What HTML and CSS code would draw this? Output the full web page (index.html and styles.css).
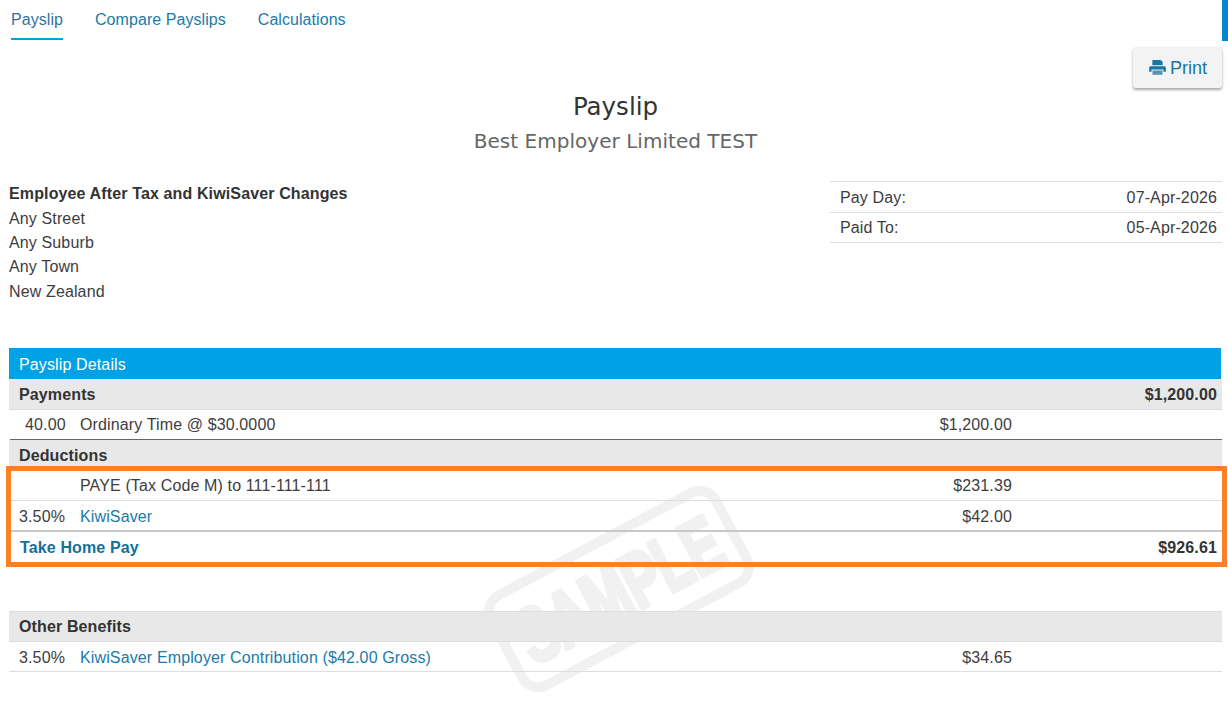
FILE: index.html
```html
<!DOCTYPE html>
<html lang="en">
<head>
<meta charset="utf-8">
<title>Payslip</title>
<link rel="stylesheet" href="styles.css">
</head>
<body>
<div class="edge"></div>
<nav class="tabs">
  <a class="tab active">Payslip</a>
  <a class="tab">Compare Payslips</a>
  <a class="tab">Calculations</a>
</nav>
<div class="print-row">
  <button class="print">
    <svg class="print-icon" viewBox="0 0 512 512" aria-hidden="true"><path d="M120 30h225l65 55v100H100V50a20 20 0 0 1 20-20z"/><path d="M50 215h412a45 45 0 0 1 45 45v125h-72v-70H77v70H5V260a45 45 0 0 1 45-45z"/><path class="print-paper" d="M105 345h302v130H105z"/></svg>
    <span>Print</span>
  </button>
</div>
<header class="title">
  <h1>Payslip</h1>
  <h2>Best Employer Limited TEST</h2>
</header>
<section class="info">
  <address class="address">
    <strong>Employee After Tax and KiwiSaver Changes</strong>
    <span>Any Street</span>
    <span>Any Suburb</span>
    <span>Any Town</span>
    <span>New Zealand</span>
  </address>
  <dl class="dates">
    <div class="date-row"><dt>Pay Day:</dt><dd>07-Apr-2026</dd></div>
    <div class="date-row"><dt>Paid To:</dt><dd>05-Apr-2026</dd></div>
  </dl>
</section>
<section class="details">
  <svg class="stamp" viewBox="0 0 280 220" aria-hidden="true">
    <g transform="rotate(-28 140 110)">
      <rect x="13" y="59" width="254" height="102" rx="18" class="stamp-box"/>
      <text x="140" y="138" text-anchor="middle" textLength="222" lengthAdjust="spacingAndGlyphs" class="stamp-text">SAMPLE</text>
    </g>
  </svg>
  <div class="heading">Payslip Details</div>
  <div class="row group"><span class="label">Payments</span><span class="total">$1,200.00</span></div>
  <div class="row line dark"><span class="qty center">40.00</span><span class="label">Ordinary Time @ $30.0000</span><span class="amt">$1,200.00</span></div>
  <div class="row group"><span class="label">Deductions</span></div>
  <div class="row line short"><span class="qty"></span><span class="label">PAYE (Tax Code M) to 111-111-111</span><span class="amt">$231.39</span></div>
  <div class="row line heavy"><span class="qty">3.50%</span><a class="label link">KiwiSaver</a><span class="amt">$42.00</span></div>
  <div class="row take short"><a class="label link">Take Home Pay</a><span class="total">$926.61</span></div>
  <div class="highlight-box"></div>
  <div class="row group benefits"><span class="label">Other Benefits</span></div>
  <div class="row line short last"><span class="qty">3.50%</span><a class="label link">KiwiSaver Employer Contribution ($42.00 Gross)</a><span class="amt">$34.65</span></div>
</section>
</body>
</html>
```
FILE: styles.css
```css
* { box-sizing: border-box; }
html, body { margin: 0; padding: 0; }
body {
  position: relative;
  width: 1228px;
  height: 704px;
  overflow: hidden;
  background: #fff;
  color: #3d3d3d;
  font: 16px/24px "Liberation Sans", Arial, sans-serif;
  letter-spacing: .13px;
}
strong, .total, .group { color: #333; }
.edge { position: absolute; top: 0; right: 0; width: 6px; height: 41px; background: #0088cc; }
.tabs { display: flex; gap: 32px; height: 40px; padding-left: 11px; letter-spacing: .06px; }
.tab { height: 40px; padding-top: 8px; color: #1a7ba8; }
.tab.active { color: #33749b; border-bottom: 2px solid #00a2e5; }
.print-row { display: flex; justify-content: flex-end; padding: 7px 6px 0 0; }
.print {
  display: flex; align-items: center; gap: 4px;
  width: 89px; height: 41px; padding: 2px 0 0 16px;
  border: 0; border-radius: 3px;
  background: #f3f3f3;
  box-shadow: 0 2px 3px rgba(0,0,0,.35);
  color: #1a75a3;
  font: 18px "Liberation Sans", Arial, sans-serif;
}
.print-icon { width: 17px; height: 17px; fill: #1a75a3; margin-top: -2px; }
.print-paper { opacity: .75; }
.title { text-align: center; padding-left: 3px; }
.title h1 { margin: 0; font: 400 24.5px/37px "DejaVu Sans", sans-serif; color: #333; letter-spacing: 0; }
.title h2 { margin: 0; font: 400 20px/32px "DejaVu Sans", sans-serif; color: #666; letter-spacing: .03px; }
.info { display: flex; justify-content: space-between; margin-top: 25px; padding: 0 6px 0 9px; height: 166px; }
.address { display: flex; flex-direction: column; font-style: normal; line-height: 24.2px; }
.address span:first-of-type { padding-top: .8px; }
.dates { width: 392px; margin: -1px 0 0; align-self: flex-start; border-top: 1px solid #ddd; }
.date-row { display: flex; justify-content: space-between; height: 31px; padding: 4px 5px 0 10px; border-bottom: 1px solid #ddd; }
.date-row + .date-row { height: 30px; padding-top: 3px; }
.date-row dt, .date-row dd { margin: 0; }
.details { position: relative; margin: 0 6px 0 9px; }
.stamp { position: absolute; left: 470px; top: 131px; width: 280px; height: 220px; overflow: visible; }
.stamp-box { fill: none; stroke: #f1f1f1; stroke-width: 10; }
.stamp-text { fill: #f1f1f1; font: 700 78px "Liberation Sans", Arial, sans-serif; stroke: #f1f1f1; stroke-width: 5px; stroke-linejoin: miter; letter-spacing: 0; }
.heading { position: relative; height: 31px; margin-right: 1px; padding: 5px 10px 0; background: #00a2e5; color: #fff; }
.row { position: relative; display: flex; align-items: center; height: 31px; }
.row.short { height: 30px; }
.group { height: 31px; padding: 2px 5px 0 10px; background: #e8e8e8; border-bottom: 1px solid #ddd; font-weight: 700; justify-content: space-between; }
.line { border-bottom: 1px solid #ddd; }
.line.dark { height: 30px; margin-left: 1px; border-bottom-color: #666; }
.line.dark .qty { width: 70px; }
.line.heavy { padding-top: 2px; border-bottom: 2px solid #c8c8c8; }
.line.last { padding-top: 2px; }
.qty { width: 71px; flex: none; padding-left: 10px; }
.qty.center { padding-left: 15px; }
.label { flex: 1; }
.link { color: #1a7ba8; }
.amt { flex: none; width: 100px; margin-right: 210px; text-align: right; }
.total { font-weight: 700; }
.highlight-box {
  position: absolute;
  left: -3px;
  top: 118px;
  width: 1221px;
  height: 101px;
  border: 5px solid #ff7f27;
}
.take { padding: 2px 5px 0 11px; justify-content: space-between; font-weight: 700; }
.take .link { color: #136f9b; }
.benefits { height: 31px; margin-top: 49px; padding-top: 0; border-top: 1px solid #ddd; }
```
